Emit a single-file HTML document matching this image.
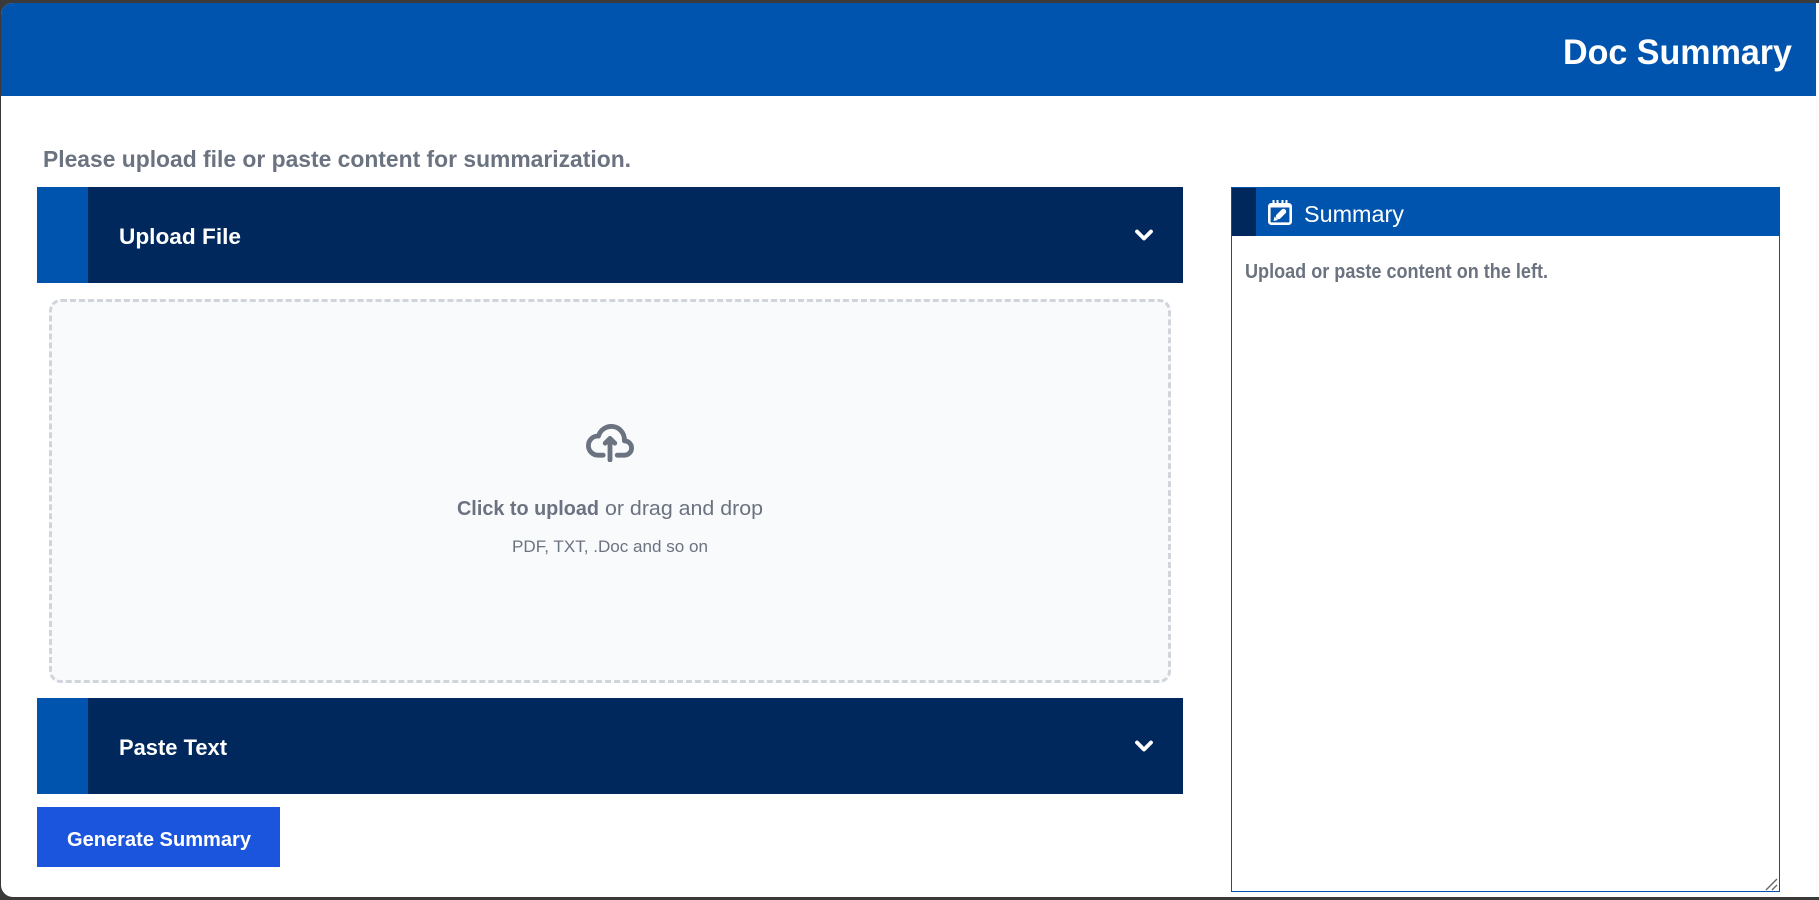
<!DOCTYPE html>
<html lang="en">
<head>
<meta charset="utf-8">
<title>Doc Summary</title>
<style>
html,body{margin:0;padding:0;width:1819px;height:900px;overflow:hidden;background:#3a3a3a}
#win{position:absolute;left:1px;top:3px;width:1818px;height:894px;background:#fff;border-radius:12px 0 0 12px;overflow:hidden}
.a{position:absolute;box-sizing:border-box}
svg{position:absolute;display:block}
text{font-family:"Liberation Sans",sans-serif}
</style>
</head>
<body>
<div id="win">
  <div class="a" style="left:1815px;top:0;width:3px;height:894px;background:#fbfbfb"></div>
  <div class="a" style="left:0;top:0;width:1815px;height:93px;background:#0054ae"></div>
</div>

<div class="a" style="left:37px;top:187px;width:1146px;height:96px;background:#00285c"></div>
<div class="a" style="left:37px;top:187px;width:51px;height:96px;background:#0054ae"></div>

<div class="a" style="left:49px;top:299px;width:1122px;height:384px;background:#f9fafb;border:3px dashed #d1d5db;border-radius:12px"></div>

<div class="a" style="left:37px;top:698px;width:1146px;height:96px;background:#00285c"></div>
<div class="a" style="left:37px;top:698px;width:51px;height:96px;background:#0054ae"></div>

<div class="a" style="left:37px;top:807px;width:243px;height:60px;background:#1c55dd"></div>

<div class="a" style="left:1231px;top:187px;width:549px;height:705px;background:#fff;border:1px solid #0054ae"></div>
<div class="a" style="left:1232px;top:187px;width:548px;height:49px;background:#0054ae"></div>
<div class="a" style="left:1232px;top:188px;width:24px;height:48px;background:#00285c"></div>

<svg style="left:586px;top:424px" width="48" height="38.4" viewBox="0 0 20 16" fill="none" stroke="#6b7280" stroke-width="2" stroke-linecap="round" stroke-linejoin="round">
  <path d="M13 13h3a3 3 0 0 0 0-6h-.025A5.56 5.56 0 0 0 16 6.5 5.5 5.5 0 0 0 5.207 5.021C5.137 5.017 5.071 5 5 5a4 4 0 0 0 0 8h2.167M10 15V6m0 0L8 8m2-2 2 2"/>
</svg>

<svg style="left:1135px;top:229px" width="18" height="12" viewBox="0 0 18 12" fill="none" stroke="#fff" stroke-width="3.8" stroke-linecap="round" stroke-linejoin="round"><path d="M2 2.5 9 9.5 16 2.5"/></svg>
<svg style="left:1135px;top:740px" width="18" height="12" viewBox="0 0 18 12" fill="none" stroke="#fff" stroke-width="3.8" stroke-linecap="round" stroke-linejoin="round"><path d="M2 2.5 9 9.5 16 2.5"/></svg>

<svg style="left:1268px;top:200px" width="24" height="25" viewBox="0 0 24 25" fill="none">
  <rect x="1.3" y="4.3" width="21.4" height="19.4" rx="2" stroke="#fff" stroke-width="2.6"/>
  <path d="M5.5 0v4M9.5 0v4M14.5 0v4M18.5 0v4" stroke="#fff" stroke-width="2"/>
  <path d="M1.5 6.5H22.5" stroke="#fff" stroke-width="2"/>
  <path d="M10.5 16.5 15.5 11.5" stroke="#fff" stroke-width="5.4" stroke-linecap="round"/>
  <path d="M5.5 21 6.5 16.5 10 20z" fill="#fff"/>
</svg>

<svg style="left:1764px;top:877px" width="15" height="15" viewBox="0 0 15 15" fill="none" stroke="#666" stroke-width="1.4"><path d="M2 13 13 2M8 13 13 8"/></svg>

<svg style="left:0;top:0" width="1819" height="900" viewBox="0 0 1819 900">
  <text x="1563" y="64" font-size="35" font-weight="700" fill="#fff" textLength="229" lengthAdjust="spacingAndGlyphs">Doc Summary</text>
  <text x="43" y="167" font-size="23" font-weight="700" fill="#6b7280" textLength="588" lengthAdjust="spacingAndGlyphs">Please upload file or paste content for summarization.</text>
  <text x="119" y="244" font-size="22" font-weight="700" fill="#fff" textLength="122" lengthAdjust="spacingAndGlyphs">Upload File</text>
  <text x="119" y="755" font-size="22" font-weight="700" fill="#fff" textLength="108" lengthAdjust="spacingAndGlyphs">Paste Text</text>
  <text x="67" y="846" font-size="20" font-weight="700" fill="#fff" textLength="184" lengthAdjust="spacingAndGlyphs">Generate Summary</text>
  <text x="457" y="515" font-size="20" font-weight="700" fill="#6b7280" textLength="142" lengthAdjust="spacingAndGlyphs">Click to upload</text>
  <text x="605" y="515" font-size="20" fill="#6b7280" textLength="158" lengthAdjust="spacingAndGlyphs">or drag and drop</text>
  <text x="512" y="552" font-size="17" fill="#6b7280" textLength="196" lengthAdjust="spacingAndGlyphs">PDF, TXT, .Doc and so on</text>
  <text x="1304" y="222" font-size="23" fill="#fff" textLength="100" lengthAdjust="spacingAndGlyphs">Summary</text>
  <text x="1245" y="278" font-size="20" font-weight="700" fill="#6b7280" textLength="303" lengthAdjust="spacingAndGlyphs">Upload or paste content on the left.</text>
</svg>
</body>
</html>
